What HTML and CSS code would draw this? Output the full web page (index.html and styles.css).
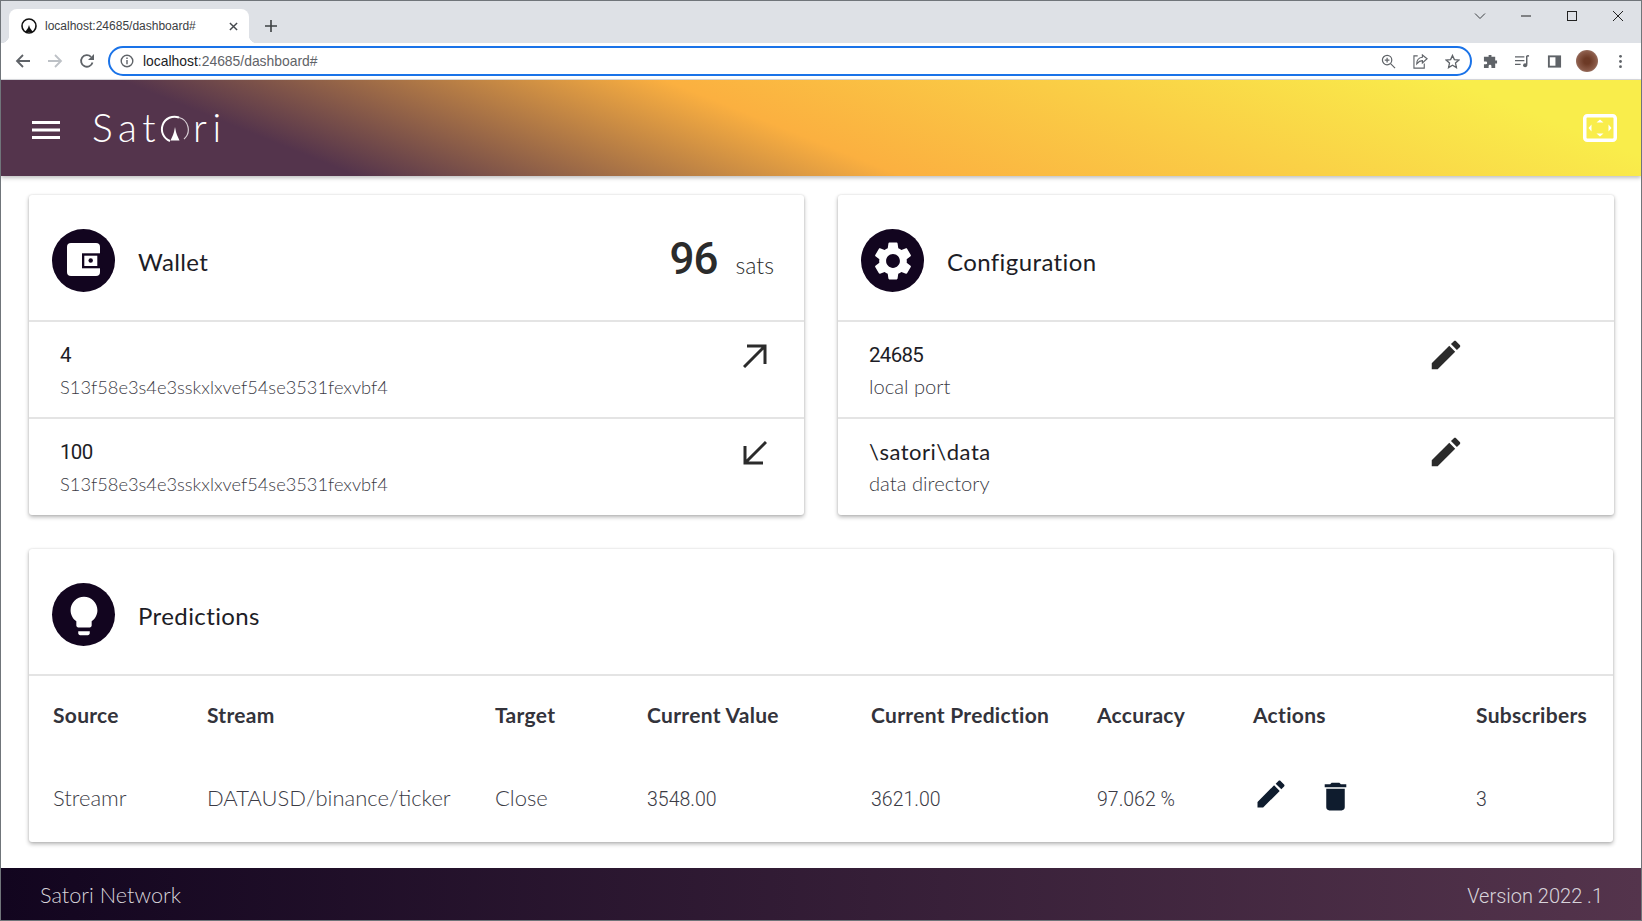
FILE: index.html
```html
<!DOCTYPE html>
<html>

<head>
  <meta charset="utf-8" />
  <title>Satori</title>
  <link rel="stylesheet" href="styles.css">
</head>

<body>
  <div class="window">
    <div class="tabstrip">
      <div class="tab">
        <svg class="favicon" viewBox="0 0 16 16"><circle cx="8" cy="8" r="7" fill="none" stroke="#111" stroke-width="1.6"/><path d="M8 7l1 3 3 4H4l3-4z" fill="#111"/></svg>
        <span class="tab-title">localhost:24685/dashboard#</span>
        <svg class="tab-close" viewBox="0 0 10 10"><path d="M1 1l8 8M9 1L1 9" stroke="#45494e" stroke-width="1.6"/></svg>
      </div>
      <svg class="new-tab" viewBox="0 0 12 12"><path d="M6 0v12M0 6h12" stroke="#3c4043" stroke-width="1.6"/></svg>
      <div class="winbtns">
        <svg viewBox="0 0 12 12"><path d="M1 3.5l5 5 5-5" fill="none" stroke="#3c4043"/></svg>
        <svg viewBox="0 0 12 12"><path d="M1 6h10" stroke="#222"/></svg>
        <svg viewBox="0 0 12 12"><rect x="1.5" y="1.5" width="9" height="9" fill="none" stroke="#222"/></svg>
        <svg viewBox="0 0 12 12"><path d="M1 1l10 10M11 1L1 11" stroke="#222"/></svg>
      </div>
    </div>

    <div class="toolbar">
      <svg class="nav-back" viewBox="0 0 16 16"><path d="M15 8H2M8 2L2 8l6 6" fill="none" stroke="#5f6368" stroke-width="1.8"/></svg>
      <svg class="nav-fwd" viewBox="0 0 16 16"><path d="M1 8h13M8 2l6 6-6 6" fill="none" stroke="#bdc1c6" stroke-width="1.8"/></svg>
      <svg class="nav-reload" viewBox="0 0 16 16"><path d="M13.5 9.5A5.8 5.8 0 1 1 12 3.8" fill="none" stroke="#5f6368" stroke-width="1.8"/><path d="M15 1v6H9z" fill="#5f6368"/></svg>
      <div class="omnibox">
        <svg class="info" viewBox="0 0 14 14"><circle cx="7" cy="7" r="5.8" fill="none" stroke="#5f6368" stroke-width="1.4"/><path d="M7 6v4.2M7 3.6v1.4" stroke="#5f6368" stroke-width="1.4"/></svg>
        <span class="url"><span class="url-host">localhost</span>:24685/dashboard#</span>
        <svg class="omni-icon" viewBox="0 0 16 16"><circle cx="6.5" cy="6.5" r="5" fill="none" stroke="#5f6368" stroke-width="1.3"/><path d="M10.2 10.2L15 15M6.5 4v5M4 6.5h5" stroke="#5f6368" stroke-width="1.3"/></svg>
        <svg class="omni-icon" viewBox="0 0 16 16"><path d="M5 2H1v13h11v-5" fill="none" stroke="#5f6368" stroke-width="1.2"/><path d="M15 5L10 1v2.500C6 4 4 7 4 10.500C6 8 8 7 10 7v2.500z" fill="none" stroke="#5f6368" stroke-width="1.2"/></svg>
        <svg class="omni-icon" viewBox="0 0 16 16"><path d="M8 1.500l2 4.500 4.800.5-3.600 3.200 1 4.800L8 12l-4.200 2.500 1-4.800L1.200 6.500 6 6z" fill="none" stroke="#5f6368" stroke-width="1.4"/></svg>
      </div>
      <div class="tool-icons">
        <svg viewBox="0 0 16 16"><path d="M6 1h3v2h4v4h2v3h-2v5H9v-2a1.500 1.500 0 0 0-3 0v2H1v-4h2a1.500 1.500 0 0 0 0-3H1V3h5z" fill="#5f6368"/></svg>
        <svg viewBox="0 0 16 16"><path d="M0 3h10M0 7h10M0 11h6" stroke="#5f6368" stroke-width="1.4"/><path d="M12.500 2v9.500" stroke="#5f6368" stroke-width="1.600"/><path d="M12.500 2H15" stroke="#5f6368" stroke-width="1.600"/><circle cx="10.800" cy="12" r="2.200" fill="#5f6368"/></svg>
        <svg viewBox="0 0 16 16"><rect x="1" y="1.500" width="14" height="13" fill="#5f6368"/><rect x="3" y="3.500" width="6" height="9" fill="#fff"/></svg>
        <span class="avatar"></span>
        <svg viewBox="0 0 16 16"><circle cx="8" cy="2.500" r="1.500" fill="#5f6368"/><circle cx="8" cy="8" r="1.500" fill="#5f6368"/><circle cx="8" cy="13.500" r="1.500" fill="#5f6368"/></svg>
      </div>
    </div>

    <div class="page">
      <div class="topbar">
        <svg class="burger" viewBox="0 0 28 18"><path d="M0 0h28v3H0zM0 7.500h28v3H0zM0 15h28v3H0z" fill="#fff"/></svg>
        <div class="logo">
          <span>Sat</span>
          <svg class="logo-o" viewBox="0 0 30 30"><path d="M19 3.500A12.500 12.500 0 1 0 10 27" fill="none" stroke="#fff" stroke-width="2"/><path d="M19 3.500A12.500 12.500 0 0 1 24 25" fill="none" stroke="#d8ced5" stroke-width="1.200"/><path d="M15 13l1 5 1 3 2.500 5.500h-9L13 21l1-3z" fill="#fff"/></svg>
          <span>ri</span>
        </div>
        <svg class="fullscreen" viewBox="0 0 34 28"><rect x="1.750" y="1.750" width="30.500" height="24.500" rx="2.500" fill="none" stroke="#fff" stroke-width="3.500"/><path d="M17 5.500l3.500 3h-7zM17 22.500l3.500-3h-7zM5.500 14l3-3.500v7zM28.500 14l-3-3.500v7z" fill="#fff"/></svg>
      </div>

      <div class="content">
        <div class="card-row">
          <div class="card">
            <div class="card-head">
              <span class="badge">
                <svg viewBox="0 0 63 63"><rect x="15" y="14" width="33" height="33" rx="4" fill="#fff"/><rect x="30" y="24.300" width="21" height="15" fill="#12051f"/><rect x="32.300" y="26.700" width="13" height="10.300" fill="#fff"/><circle cx="38.700" cy="31.500" r="2.200" fill="#12051f"/></svg>
              </span>
              <span class="card-title">Wallet</span>
              <span class="balance"><span class="balance-num">96</span><span class="balance-unit">sats</span></span>
            </div>
            <div class="item">
              <div class="item-text">
                <div class="item-main num">4</div>
                <div class="item-sub addr">S13f58e3s4e3sskxlxvef54se3531fexvbf4</div>
              </div>
              <svg class="item-icon" viewBox="0 0 24 24"><path d="M1 23L22 2M4 2h18v18" fill="none" stroke="#2b2b2b" stroke-width="3"/></svg>
            </div>
            <div class="item">
              <div class="item-text">
                <div class="item-main num">100</div>
                <div class="item-sub addr">S13f58e3s4e3sskxlxvef54se3531fexvbf4</div>
              </div>
              <svg class="item-icon" viewBox="0 0 24 24"><path d="M23 1L2 22M2 5v17h18" fill="none" stroke="#2b2b2b" stroke-width="3"/></svg>
            </div>
          </div>

          <div class="card">
            <div class="card-head">
              <span class="badge">
                <svg viewBox="0 0 24 24" class="badge-icon"><path d="M19.140 12.940c.04-.3.06-.61.06-.94 0-.32-.02-.64-.07-.94l2.030-1.580c.18-.14.23-.41.12-.61l-1.920-3.320c-.12-.22-.37-.29-.59-.22l-2.390.96c-.5-.38-1.030-.7-1.620-.94l-.36-2.540c-.04-.24-.24-.41-.48-.41h-3.840c-.24 0-.43.17-.47.41l-.36 2.540c-.59.24-1.130.57-1.620.94l-2.390-.96c-.22-.08-.47 0-.59.22L2.740 8.870c-.12.21-.08.47.12.61l2.030 1.580c-.05.3-.09.63-.09.94s.02.64.07.94l-2.030 1.580c-.18.14-.23.41-.12.61l1.920 3.320c.12.22.37.29.59.22l2.390-.96c.5.38 1.030.7 1.620.94l.36 2.540c.05.24.24.41.48.41h3.840c.24 0 .44-.17.47-.41l.36-2.540c.59-.24 1.130-.56 1.620-.94l2.390.96c.22.08.47 0 .59-.22l1.920-3.320c.12-.22.07-.47-.12-.61l-2.010-1.580zM12 15.600c-1.980 0-3.600-1.620-3.600-3.600s1.620-3.600 3.600-3.600 3.600 1.620 3.600 3.600-1.620 3.600-3.600 3.600z" fill="#fff"/></svg>
              </span>
              <span class="card-title">Configuration</span>
            </div>
            <div class="item item-config">
              <div class="item-text">
                <div class="item-main num">24685</div>
                <div class="item-sub">local port</div>
              </div>
              <svg class="item-edit" viewBox="0 0 24 24"><path d="M3 17.250V21h3.750L17.810 9.940l-3.750-3.750L3 17.250zM20.710 7.040c.39-.39.39-1.020 0-1.410l-2.340-2.340c-.39-.39-1.020-.39-1.410 0l-1.830 1.830 3.750 3.750 1.830-1.830z" fill="#2b2b2b"/></svg>
            </div>
            <div class="item item-config">
              <div class="item-text">
                <div class="item-main path">\satori\data</div>
                <div class="item-sub">data directory</div>
              </div>
              <svg class="item-edit" viewBox="0 0 24 24"><path d="M3 17.250V21h3.750L17.810 9.940l-3.750-3.750L3 17.250zM20.710 7.040c.39-.39.39-1.020 0-1.410l-2.340-2.340c-.39-.39-1.020-.39-1.410 0l-1.830 1.830 3.750 3.750 1.830-1.830z" fill="#2b2b2b"/></svg>
            </div>
          </div>
        </div>

        <div class="card">
          <div class="card-head">
            <span class="badge">
              <svg viewBox="0 0 24 24" class="badge-icon bulb"><path d="M9 21c0 .55.45 1 1 1h4c.55 0 1-.45 1-1v-1H9v1zm3-19C8.140 2 5 5.140 5 9c0 2.380 1.190 4.470 3 5.740V17c0 .55.45 1 1 1h6c.55 0 1-.45 1-1v-2.260c1.810-1.270 3-3.360 3-5.740 0-3.860-3.140-7-7-7z" fill="#fff"/></svg>
            </span>
            <span class="card-title">Predictions</span>
          </div>
          <div class="streams">
            <div class="th">Source</div>
            <div class="th">Stream</div>
            <div class="th">Target</div>
            <div class="th">Current Value</div>
            <div class="th">Current Prediction</div>
            <div class="th">Accuracy</div>
            <div class="th">Actions</div>
            <div class="th">Subscribers</div>
            <div class="td">Streamr</div>
            <div class="td">DATAUSD/binance/ticker</div>
            <div class="td">Close</div>
            <div class="td num">3548.00</div>
            <div class="td num">3621.00</div>
            <div class="td num">97.062 %</div>
            <div class="td actions">
              <svg class="act-edit" viewBox="0 0 24 24"><path d="M3 17.250V21h3.750L17.810 9.940l-3.750-3.750L3 17.250zM20.710 7.040c.39-.39.39-1.020 0-1.410l-2.340-2.340c-.39-.39-1.020-.39-1.410 0l-1.830 1.830 3.750 3.750 1.830-1.830z" fill="#0f1c2e"/></svg>
              <svg class="act-del" viewBox="0 0 24 24"><path d="M6 19c0 1.100.9 2 2 2h8c1.100 0 2-.9 2-2V7H6v12zM19 4h-3.500l-1-1h-5l-1 1H5v2h14V4z" fill="#0f1c2e"/></svg>
            </div>
            <div class="td num">3</div>
          </div>
        </div>
      </div>

      <div class="footer">
        <span class="network">Satori Network</span>
        <span class="num version">Version 2022 .1</span>
      </div>
    </div>
  </div>
</body>

</html>
```

FILE: styles.css
```css
* {
  box-sizing: border-box;
}

body {
  margin: 0;
  font-family: "Lato", "Open Sans", sans-serif;
  background: #fff;
  overflow: hidden;
}

.window {
  width: 1642px;
  height: 921px;
  border: 1px solid #70757a;
  display: flex;
  flex-direction: column;
  overflow: hidden;
}

svg {
  display: block;
  flex: none;
}

/* browser chrome */
.tabstrip {
  height: 42px;
  background: #dee1e6;
  display: flex;
  align-items: flex-end;
  padding-left: 8px;
}

.tab {
  position: relative;
  width: 240px;
  height: 34px;
  background: #fff;
  border-radius: 8px 8px 0 0;
  display: flex;
  align-items: center;
  padding-left: 12px;
}

.tab::before,
.tab::after {
  content: "";
  position: absolute;
  bottom: 0;
  width: 8px;
  height: 8px;
}

.tab::before {
  left: -8px;
  background: radial-gradient(circle at 0 0, #dee1e6 8px, #fff 8.5px);
}

.tab::after {
  right: -8px;
  background: radial-gradient(circle at 100% 0, #dee1e6 8px, #fff 8.5px);
}

.favicon {
  width: 16px;
  height: 16px;
}

.tab-title {
  margin-left: 8px;
  font: 12px "Liberation Sans", sans-serif;
  color: #3c4043;
  white-space: nowrap;
}

.tab-close {
  width: 9px;
  height: 9px;
  margin-left: auto;
  margin-right: 11px;
}

.new-tab {
  width: 12px;
  height: 12px;
  margin-left: 16px;
  margin-bottom: 11px;
}

.winbtns {
  margin-left: auto;
  align-self: flex-start;
  display: flex;
  gap: 34px;
  padding: 9px 17px 0 0;
}

.winbtns svg {
  width: 12px;
  height: 12px;
}

.toolbar {
  height: 37px;
  background: #fff;
  border-bottom: 1px solid #dadce0;
  display: flex;
  align-items: center;
  padding-left: 14px;
}

.toolbar > svg {
  width: 16px;
  height: 16px;
}

.nav-fwd {
  margin-left: 16px;
}

.nav-reload {
  margin-left: 16px;
}

.omnibox {
  width: 1364px;
  height: 30px;
  margin-left: 13px;
  border: 2px solid #1a73e8;
  border-radius: 15px;
  display: flex;
  align-items: center;
  padding: 0 10px 0 10px;
  gap: 17px;
}

.info {
  width: 14px;
  height: 14px;
}

.url {
  margin-left: -8px;
  flex: 1;
  font: 13.9px "Liberation Sans", sans-serif;
  color: #5f6368;
}

.url-host {
  color: #202124;
}

.omni-icon {
  width: 15px;
  height: 15px;
}

.tool-icons {
  display: flex;
  align-items: center;
  gap: 17px;
  margin-left: 11px;
}

.tool-icons svg {
  width: 15px;
  height: 15px;
}

.avatar {
  width: 22px;
  height: 22px;
  margin-left: -3px;
  margin-right: -2px;
  border-radius: 50%;
  background: radial-gradient(circle at 50% 50%, #6d3a26 20%, #8a5a48 60%, #b8a49c 100%);
}

/* page */
.page {
  flex: 1;
  display: flex;
  flex-direction: column;
  min-height: 0;
}

.topbar {
  height: 96px;
  flex: none;
  background: linear-gradient(22deg, #54344c 19%, #fbb040 48%, #f9ed4b 90%);
  box-shadow: 0 2px 4px rgba(0, 0, 0, 0.25);
  display: flex;
  align-items: center;
  padding: 0 24px 0 31px;
  position: relative;
}

.burger {
  width: 28px;
  height: 18px;
  margin-top: 4px;
}

.logo {
  display: flex;
  align-items: center;
  margin: -2px 0 0 32px;
  font-weight: 300;
  font-size: 39px;
  letter-spacing: 5.5px;
  color: #fff;
}

.logo-o {
  width: 30px;
  height: 30px;
  margin: 4px 3px 0 -1px;
}

.fullscreen {
  width: 34px;
  height: 28px;
  margin-left: auto;
}

.content {
  flex: 1;
  padding: 19px 28px 0 28px;
  display: flex;
  flex-direction: column;
  gap: 34px;
}

.card-row {
  display: grid;
  grid-template-columns: 775px 776px;
  gap: 34px;
}

.card {
  background: #fff;
  border-radius: 3px;
  box-shadow: 0 2px 4px rgba(0, 0, 0, 0.3), 0 0 2px rgba(0, 0, 0, 0.12);
}

.card-head {
  height: 127px;
  border-bottom: 2px solid #e4e4e4;
  display: flex;
  align-items: center;
  padding: 8px 30px 0 23px;
}

.badge {
  width: 63px;
  height: 63px;
  border-radius: 50%;
  background: #12051f;
  display: flex;
  align-items: center;
  justify-content: center;
  margin-top: -2px;
}

.badge-icon {
  width: 46px;
  height: 46px;
}

.bulb {
  margin-top: 2px;
}

.card-title {
  margin-left: 23px;
  font-size: 24px;
  letter-spacing: 0.4px;
  color: #1d1d26;
}

.balance {
  margin-left: auto;
  margin-top: -5px;
  display: flex;
  align-items: baseline;
  gap: 18px;
  color: #2b2b2b;
}

.balance-num {
  font-family: "Roboto", sans-serif;
  font-weight: 500;
  font-size: 44px;
  letter-spacing: -1px;
}

.balance-unit {
  font-size: 23px;
  font-weight: 300;
}

.item {
  height: 97px;
  padding: 0 37px 0 31px;
  display: flex;
  align-items: flex-start;
  justify-content: space-between;
  border-bottom: 2px solid #e4e4e4;
}

.item:last-child {
  border-bottom: none;
  height: 96px;
}

.item-config {
  padding-right: 149px;
}

.item-main {
  margin-top: 19px;
  font-size: 20px;
  line-height: 28px;
  color: #1d1d26;
}

.item-main.path {
  font-size: 22px;
  letter-spacing: 0.5px;
}

.item-sub {
  margin-top: 3px;
  font-size: 20.2px;
  font-weight: 300;
  line-height: 28px;
  color: #3b3b45;
}

.item-sub.addr {
  margin-top: 4px;
  font-size: 18.3px;
}

.num {
  font-family: "Roboto", sans-serif;
  font-weight: 300;
}

.item-main.num {
  font-size: 20.5px;
  letter-spacing: -0.7px;
  font-weight: 400;
}

.item-icon {
  width: 24px;
  height: 24px;
  margin-top: 22px;
}

.item-edit {
  width: 38px;
  height: 38px;
  margin-top: 14px;
}

.streams {
  display: grid;
  grid-template-columns: 154px 288px 152px 224px 226px 156px 223px auto;
  grid-template-rows: 83px 83px;
  padding: 0 23px 0 24px;
}

.th,
.td {
  display: flex;
  align-items: center;
  color: #3b3b45;
}

.th {
  font-size: 21px;
  font-weight: 700;
  letter-spacing: 0.3px;
  color: #33333b;
  padding-bottom: 6px;
}

.td {
  font-size: 22px;
  font-weight: 300;
  padding-bottom: 7px;
}

.td.num {
  font-size: 19.5px;
  padding-bottom: 3px;
}

.actions {
  gap: 28px;
}

.act-edit {
  width: 36px;
  height: 36px;
  margin-top: -6px;
}

.act-del {
  width: 37px;
  height: 37px;
  margin-top: -2px;
}

.footer {
  height: 52px;
  flex: none;
  background: linear-gradient(90deg, #12051f 0%, #54344c 100%);
  display: flex;
  align-items: center;
  justify-content: space-between;
  padding: 0 38px 0 39px;
  color: #d7d3da;
  font-size: 21.7px;
  font-weight: 300;
}

.network {
  margin-top: 2px;
}

.version {
  font-size: 20px;
  margin-top: 3px;
}
```
